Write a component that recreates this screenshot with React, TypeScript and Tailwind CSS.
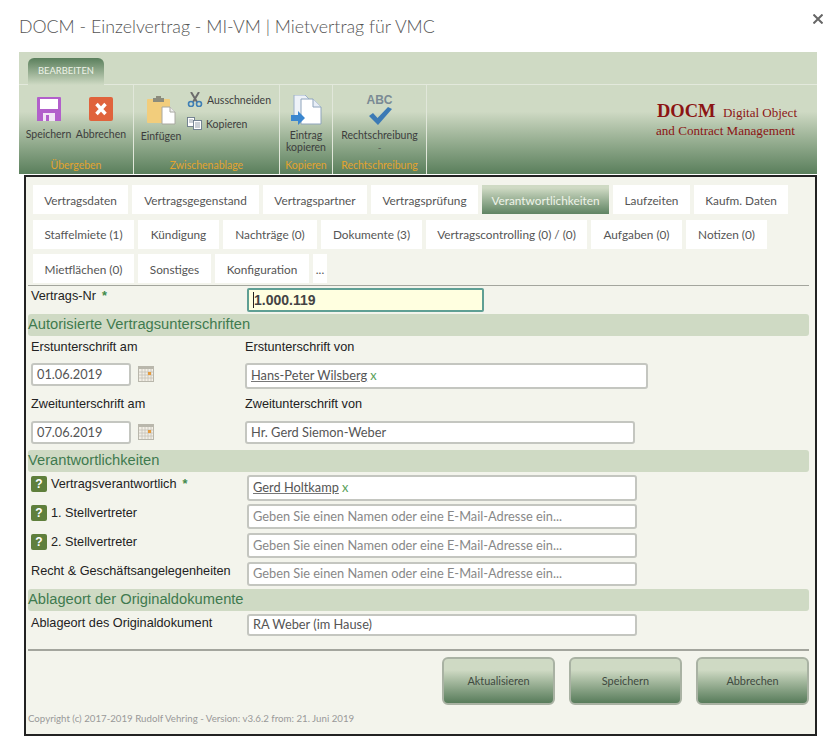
const segoe = 'font-["Lato",sans-serif]';

const tabRows = [
	[
		{ label: 'Vertragsdaten', w: 'w-[95px]' },
		{ label: 'Vertragsgegenstand', w: 'w-[127px]' },
		{ label: 'Vertragspartner', w: 'w-[104px]' },
		{ label: 'Vertragsprüfung', w: 'w-[107px]' },
		{ label: 'Verantwortlichkeiten', w: 'w-[127px]', active: true },
		{ label: 'Laufzeiten', w: 'w-[77px]' },
		{ label: 'Kaufm. Daten', w: 'w-[94px]' },
	],
	[
		{ label: 'Staffelmiete (1)', w: 'w-[101px]' },
		{ label: 'Kündigung', w: 'w-[81px]' },
		{ label: 'Nachträge (0)', w: 'w-[94px]' },
		{ label: 'Dokumente (3)', w: 'w-[101px]' },
		{ label: 'Vertragscontrolling (0) / (0)', w: 'w-[161px]' },
		{ label: 'Aufgaben (0)', w: 'w-[91px]' },
		{ label: 'Notizen (0)', w: 'w-[81px]' },
	],
	[
		{ label: 'Mietflächen (0)', w: 'w-[101px]' },
		{ label: 'Sonstiges', w: 'w-[73px]' },
		{ label: 'Konfiguration', w: 'w-[94px]' },
		{ label: '...', w: 'w-[14px]' },
	],
];

const SaveIcon = () => (
	<svg width="24" height="24" viewBox="0 0 24 24">
		<path d="M0 1 Q0 0 1 0 H23 Q24 0 24 1 V24 H0 Z" fill="#b25fcb" />
		<rect x="3" y="2" width="18" height="10" fill="#fff" />
		<rect x="6" y="16" width="12" height="8" fill="#f1e4f5" />
		<rect x="9" y="18" width="3" height="6" fill="#b25fcb" />
	</svg>
);

const CancelIcon = () => (
	<svg width="24" height="24" viewBox="0 0 24 24">
		<rect width="24" height="24" rx="2" fill="#e0633c" />
		<path d="M7.5 7 L16.5 17 M16.5 7 L7.5 17" stroke="#fff" strokeWidth="3.4" />
	</svg>
);

const PasteIcon = () => (
	<svg width="29" height="29" viewBox="0 0 29 29">
		<rect x="0" y="3" width="23" height="24" rx="1" fill="#f2cd7c" />
		<rect x="6" y="2" width="11" height="4" fill="#8c8c7c" />
		<rect x="9" y="0" width="5" height="3" fill="#8c8c7c" />
		<path d="M15 11 H23 L28 16 V28 H15 Z" fill="#fff" stroke="#a8a8a0" />
		<path d="M23 11 V16 H28" fill="#eee" stroke="#a8a8a0" />
	</svg>
);

const ScissorsIcon = () => (
	<svg width="16" height="15" viewBox="0 0 16 15" fill="none">
		<path d="M4 0 L10 10 M12 0 L6 10" stroke="#6c6c6c" strokeWidth="2" />
		<circle cx="4" cy="12" r="2.5" stroke="#3f7fb5" strokeWidth="1.6" />
		<circle cx="12" cy="12" r="2.5" stroke="#3f7fb5" strokeWidth="1.6" />
	</svg>
);

const CopyIcon = () => (
	<svg width="15" height="13" viewBox="0 0 15 13" fill="#fff" stroke="#6a7a8a" strokeWidth="0.9">
		<rect x="0.5" y="0.5" width="7" height="9" />
		<rect x="6.5" y="3.5" width="8" height="9" />
		<path d="M2 3 H6 M2 5 H6 M8 6 H13 M8 8 H13 M8 10 H13" strokeWidth="0.7" />
	</svg>
);

const EntryCopyIcon = () => (
	<svg width="31" height="31" viewBox="0 0 31 31">
		<path d="M3 0 H14 L20 6 V24 H3 Z" fill="#eef2f8" stroke="#9cb0c8" />
		<path d="M10 4 H22 L30 12 V29 H10 Z" fill="#fff" stroke="#8ea4bc" />
		<path d="M22 4 V12 H30" fill="#e8eef6" stroke="#8ea4bc" />
		<path d="M0 20 H7 V16 L14 23 L7 30 V26 H0 Z" fill="#3a86cf" />
	</svg>
);

const CheckIcon = () => (
	<svg width="24" height="18" viewBox="0 0 24 18">
		<path d="M1 9 L5 6 L9.5 11 L20 0 L24 2 L10 18 Z" fill="#3c7ab5" />
	</svg>
);

const CalendarIcon = () => (
	<svg width="16" height="16" viewBox="0 0 16 16">
		<rect width="16" height="16" fill="#b9b7ac" />
		<rect x="1" y="3" width="14" height="12" fill="#f2efe6" />
		<path d="M1 6 H15 M1 9 H15 M1 12 H15 M4 3 V15 M7 3 V15 M10 3 V15 M13 3 V15" stroke="#c5c2b8" strokeWidth="0.8" />
		<rect x="10" y="6" width="3" height="3" fill="#e49a3c" />
	</svg>
);

const HelpBadge = () => (
	<span className='flex h-4 w-4 shrink-0 items-center justify-center rounded-[2px] bg-[#5f7f3c] text-[12px] font-bold leading-none text-white font-["Liberation_Sans",sans-serif]'>
		?
	</span>
);

const Star = () => <span className="ml-[6px] font-bold text-[#3f8a4a]">*</span>;

const Section = ({ title, className }: { title: string; className: string }) => (
	<div
		className={`h-[22px] rounded-[3px] bg-[#cfdac4] text-[14.7px] leading-[21px] text-[#3f7a4f] ${className}`}
	>
		{title}
	</div>
);

const TextBox = ({ className, children }: { className: string; children: React.ReactNode }) => (
	<div
		className={`flex items-center rounded-[3px] border-2 border-[#c4c6c0] bg-white px-[4px] text-[12.8px] text-[#555] ${segoe} ${className}`}
	>
		{children}
	</div>
);

const Person = ({ name }: { name: string }) => (
	<>
		<span className="underline decoration-[#777]">{name}</span>
		<span className="ml-[3px] text-[#58a058]">x</span>
	</>
);

const placeholder = 'Geben Sie einen Namen oder eine E-Mail-Adresse ein...';

const FormRow = ({
	help,
	label,
	star,
	className,
	inputClass,
	children,
}: {
	help?: boolean;
	label: string;
	star?: boolean;
	className: string;
	inputClass: string;
	children: React.ReactNode;
}) => (
	<div className={`flex ${className}`}>
		<div className="flex w-[219px] items-start gap-[4px] pl-[3px] pt-[1px] leading-[16px] text-[#222]">
			{help && <HelpBadge />}
			<span>
				{label}
				{star && <Star />}
			</span>
		</div>
		<TextBox className={`w-[390px] ${inputClass}`}>{children}</TextBox>
	</div>
);

const RibbonLabel = ({ children, className = '' }: { children: React.ReactNode; className?: string }) => (
	<div className={`whitespace-nowrap text-center text-[10.5px] leading-[12px] text-[#3d3d3d] ${className}`}>{children}</div>
);

const Group = ({ title, className, children }: { title: string; className: string; children: React.ReactNode }) => (
	<div className={`flex flex-col border-r border-[#e1e7da] ${className}`}>
		<div className="flex-1">{children}</div>
		<div className="h-[15px] text-center text-[10.5px] leading-[13px] text-[#e3a32e]">{title}</div>
	</div>
);

const BottomButton = ({ label }: { label: string }) => (
	<button className="h-[48px] w-[113px] rounded-[6px] border-2 border-[#a9b2a3] bg-linear-to-b from-[#cfdac4] from-25% to-[#587c5b] pt-[1px] text-[10.9px] text-[#3f4a3f]">
		{label}
	</button>
);

export default function App() {
	return (
		<div className={`h-[754px] w-[835px] overflow-hidden bg-white ${segoe}`}>
			{/* title */}
			<div className="flex h-[52px] items-start pl-[19px]">
				<div className="pt-[12px] text-[17.8px] font-light leading-[28px] text-[#555]">
					DOCM - Einzelvertrag - MI-VM | Mietvertrag für VMC
				</div>
				<svg className="ml-auto mr-[12px] mt-[14px]" width="10" height="10" viewBox="0 0 10 10">
					<path d="M0.5 0.5 L9.5 9.5 M9.5 0.5 L0.5 9.5" stroke="#666" strokeWidth="2" />
				</svg>
			</div>

			{/* ribbon */}
			<div className="ml-[19px] w-[798px]">
				<div className="h-[33px] border-b border-[#e3e9dc] bg-[#cfdac4] pl-[9px] pt-[6px]">
					<div className="flex h-[27px] w-[76px] items-center justify-center rounded-t-[6px] bg-linear-to-b from-[#5a7f5c] to-[#cfdac4] text-[9.4px] text-[#eef3e8]">
						BEARBEITEN
					</div>
				</div>
				<div className="flex h-[89px] bg-linear-to-b from-[#cfdac4] from-30% to-[#5a7f5c]">
					<Group title="Übergeben" className="w-[115px]">
						<div className="flex pl-[6px] pt-[12px]">
							<div className="flex w-[47px] flex-col items-center gap-[7px]">
								<SaveIcon />
								<RibbonLabel>Speichern</RibbonLabel>
							</div>
							<div className="ml-[4px] flex w-[50px] flex-col items-center gap-[7px]">
								<CancelIcon />
								<RibbonLabel>Abbrechen</RibbonLabel>
							</div>
						</div>
					</Group>
					<Group title="Zwischenablage" className="w-[146px]">
						<div className="flex pl-[6px]">
							<div className="flex w-[42px] flex-col items-center gap-[5px] pt-[11px]">
								<PasteIcon />
								<RibbonLabel>Einfügen</RibbonLabel>
							</div>
							<div className="ml-[5px] flex flex-col gap-[10px] pt-[7px]">
								<div className="flex items-center gap-[4px]">
									<ScissorsIcon />
									<RibbonLabel>Ausschneiden</RibbonLabel>
								</div>
								<div className="flex items-center gap-[4px]">
									<CopyIcon />
									<RibbonLabel>Kopieren</RibbonLabel>
								</div>
							</div>
						</div>
					</Group>
					<Group title="Kopieren" className="w-[53px]">
						<div className="flex flex-col items-center gap-[3px] pt-[10px]">
							<EntryCopyIcon />
							<RibbonLabel>
								Eintrag
								<br />
								kopieren
							</RibbonLabel>
						</div>
					</Group>
					<Group title="Rechtschreibung" className="w-[94px]">
						<div className="flex flex-col items-center pt-[9px]">
							<div className='text-[12px] font-bold leading-[13px] text-[#7a8a94] font-["Liberation_Sans",sans-serif]'>
								ABC
							</div>
							<CheckIcon />
							<RibbonLabel className="mt-[4px]">Rechtschreibung</RibbonLabel>
							<div className="text-[10px] leading-[12px] text-[#555]">-</div>
						</div>
					</Group>
					<div className='ml-auto mr-[19px] w-[142px] pr-[1px] pt-[16px] text-[#8b1414] font-["Liberation_Serif",serif]'>
						<div className="flex items-baseline justify-between pl-[1px] leading-[20px]">
							<span className="text-[18.5px] font-bold">DOCM</span>
							<span className="text-[13px]">Digital Object</span>
						</div>
						<div className="whitespace-nowrap text-[13.1px] leading-[16px]">and Contract Management</div>
					</div>
				</div>
			</div>

			{/* panel */}
			<div
				className='ml-[24px] mt-[1px] h-[561px] w-[793px] border-2 border-[#222] bg-[#f3f4ec] pl-[2px] pr-[6px] pt-[8px] text-[12px] font-["Liberation_Sans",sans-serif]'
			>
				<div className={`flex flex-col gap-[5.5px] pl-[5px] ${segoe}`}>
					{tabRows.map((row, i) => (
						<div key={i} className="flex gap-[4px]">
							{row.map((t) => (
								<div
									key={t.label}
									className={`flex h-[29px] items-center justify-center whitespace-nowrap pt-[2px] text-[11.8px] ${t.w} ${
										t.active
											? 'bg-linear-to-b from-[#cfdac4] from-10% to-[#5f8463] text-[#eef3e8]'
											: 'bg-white text-[#555]'
									}`}
								>
									{t.label}
								</div>
							))}
						</div>
					))}
				</div>
				<div className="mt-[2px] h-px bg-[#a3a59d]" />

				<div className="mt-[2px] flex h-[24px]">
					<div className="w-[219px] pl-[3px] text-[12.7px] leading-[16px] text-[#222]">
						Vertrags-Nr
						<Star />
					</div>
					<div className="flex w-[237px] items-center rounded-[2px] border-2 border-[#5f9f94] bg-[#ffffe0] pl-[4px] text-[14px] font-bold text-[#444]">
						<span className="border-l border-[#222] leading-[16px]">1.000.119</span>
					</div>
				</div>

				<Section title="Autorisierte Vertragsunterschriften" className="mt-[2px]" />

				<div className="mt-[3px] flex text-[12.7px] leading-[16px] text-[#222]">
					<div className="w-[217px] pl-[3px]">Erstunterschrift am</div>
					<div>Erstunterschrift von</div>
				</div>
				<div className="mt-[8px] flex items-start">
					<TextBox className="ml-[3px] h-[23px] w-[100px]">01.06.2019</TextBox>
					<div className="ml-[7px] mt-[3px]">
						<CalendarIcon />
					</div>
					<TextBox className="ml-[91px] h-[26px] w-[403px]">
						<Person name="Hans-Peter Wilsberg" />
					</TextBox>
				</div>

				<div className="mt-[7px] flex text-[12.7px] leading-[16px] text-[#222]">
					<div className="w-[217px] pl-[3px]">Zweitunterschrift am</div>
					<div>Zweitunterschrift von</div>
				</div>
				<div className="mt-[9px] flex items-start">
					<TextBox className="ml-[3px] h-[23px] w-[100px]">07.06.2019</TextBox>
					<div className="ml-[7px] mt-[3px]">
						<CalendarIcon />
					</div>
					<TextBox className="ml-[91px] h-[23px] w-[390px]">Hr. Gerd Siemon-Weber</TextBox>
				</div>

				<Section title="Verantwortlichkeiten" className="mt-[6px]" />

				<FormRow help star label="Vertragsverantwortlich" className="mt-[3px] text-[12.7px]" inputClass="h-[26px]">
					<Person name="Gerd Holtkamp" />
				</FormRow>
				<FormRow help label="1. Stellvertreter" className="mt-[3px] text-[12.7px]" inputClass="h-[25px] text-[#888]">
					{placeholder}
				</FormRow>
				<FormRow help label="2. Stellvertreter" className="mt-[4px] text-[12.7px]" inputClass="h-[25px] text-[#888]">
					{placeholder}
				</FormRow>
				<FormRow label="Recht & Geschäftsangelegenheiten" className="mt-[4px] text-[12.7px]" inputClass="h-[24px] text-[#888]">
					{placeholder}
				</FormRow>

				<Section title="Ablageort der Originaldokumente" className="mt-[3px]" />

				<FormRow label="Ablageort des Originaldokument" className="mt-[3px] text-[12.7px]" inputClass="h-[22px]">
					RA Weber (im Hause)
				</FormRow>

				<div className="mt-[13px] h-[2px] bg-[#a3a59d]" />

				<div className={`mt-[6px] flex justify-end gap-[14px] ${segoe}`}>
					<BottomButton label="Aktualisieren" />
					<BottomButton label="Speichern" />
					<BottomButton label="Abbrechen" />
				</div>

				<div className={`mt-[7px] text-[9.7px] leading-[12px] text-[#999] ${segoe}`}>
					Copyright (c) 2017-2019 Rudolf Vehring - Version: v3.6.2 from: 21. Juni 2019
				</div>
			</div>
		</div>
	);
}
